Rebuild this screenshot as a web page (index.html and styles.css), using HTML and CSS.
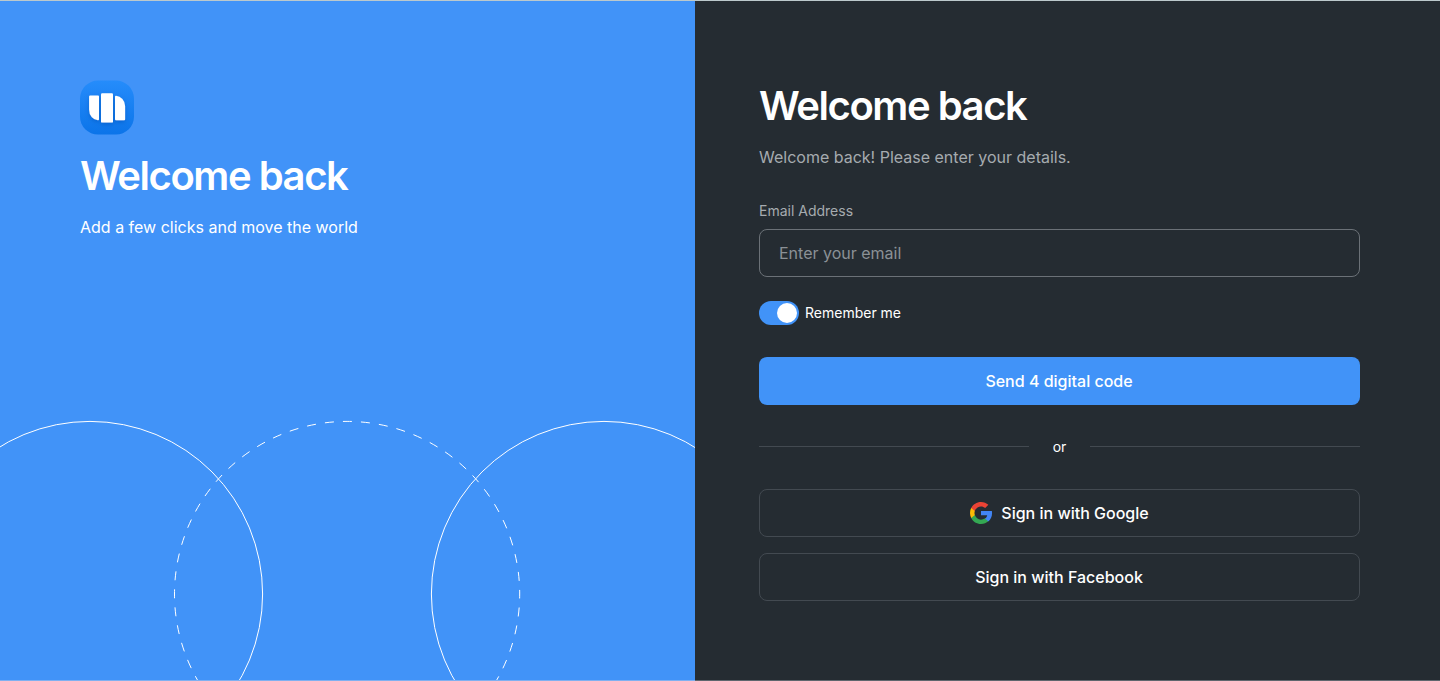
FILE: index.html
```html
<!DOCTYPE html>
<html lang="en">
<head>
<meta charset="utf-8">
<title>Welcome back</title>
<link rel="stylesheet" href="styles.css">
</head>
<body>
<main class="page">
  <section class="intro">
    <svg class="rings" width="695" height="261" viewBox="0 0 695 261" fill="none" stroke="#fff" aria-hidden="true">
      <circle cx="90" cy="174" r="172.6"/>
      <circle cx="347.1" cy="174" r="172.6" stroke-dasharray="9.037 9.037" stroke-dashoffset="4.52"/>
      <circle cx="604" cy="174" r="172.6"/>
    </svg>
    <svg class="logo" width="54" height="54" viewBox="0 0.4 54 54" aria-hidden="true">
      <defs>
        <linearGradient id="tile" x1="0" y1="0" x2="0" y2="1">
          <stop offset="0" stop-color="#258cfb"/>
          <stop offset="1" stop-color="#0b74e9"/>
        </linearGradient>
        <filter id="shade" x="-30%" y="-30%" width="160%" height="180%">
          <feDropShadow dx="0" dy="2" stdDeviation="2" flood-color="#0050b5" flood-opacity=".5"/>
        </filter>
      </defs>
      <rect width="54" height="54" rx="18" fill="url(#tile)"/>
      <g fill="#fff" filter="url(#shade)">
        <path d="M10.200 14.900H18a1 1 0 0 1 1 1V38.600a1 1 0 0 1-1 1A9 10.500 0 0 1 9.100 29V16a1.100 1.100 0 0 1 1.100-1.100z"/>
        <rect x="21" y="12.600" width="12" height="29.400" rx="1.200"/>
        <path d="M36 15.100A9.500 10.500 0 0 1 45.100 25.500V38.600a1 1 0 0 1-1 1H36a1 1 0 0 1-1-1V16.100a1 1 0 0 1 1-1z"/>
      </g>
    </svg>
    <h1 class="title">Welcome back</h1>
    <p class="lead">Add a few clicks and move the world</p>
  </section>
  <section class="panel">
    <h2 class="title">Welcome back</h2>
    <p class="lead muted">Welcome back! Please enter your details.</p>
    <form class="form">
      <label class="label" for="email">Email Address</label>
      <input class="field" id="email" type="email" placeholder="Enter your email">
      <div class="remember"><span class="switch"><span class="knob"></span></span><span class="remember-text">Remember me</span></div>
      <button class="button primary" type="button">Send 4 digital code</button>
      <div class="divider"><span class="or">or</span></div>
      <button class="button outline" type="button">
        <svg class="google" width="24" height="24" viewBox="0 0 24 24" aria-hidden="true">
          <path fill="#4285f4" d="M23.060 12.250c0-.780-.070-1.530-.200-2.250H12v4.260h6.220c-.260 1.370-1.040 2.530-2.210 3.310v2.770h3.570c2.080-1.920 3.480-4.740 3.480-8.090z"/>
          <path fill="#34a853" d="M12 23c2.970 0 5.460-.980 7.280-2.660l-3.570-2.770c-.980.660-2.230 1.060-3.710 1.060-2.860 0-5.290-1.930-6.160-4.530H2.180v2.840C3.990 20.530 7.700 23 12 23z"/>
          <path fill="#fbbc05" d="M5.840 14.090c-.220-.660-.350-1.360-.350-2.090s.130-1.430.350-2.090V7.070H2.180C1.430 8.550 1 10.220 1 12s.430 3.450 1.180 4.930z"/>
          <path fill="#ea4335" d="M12 5.380c1.620 0 3.060.560 4.210 1.640l3.150-3.150C17.450 2.090 14.970 1 12 1 7.700 1 3.990 3.470 2.180 7.070l3.660 2.840c.870-2.600 3.300-4.530 6.160-4.530z"/>
        </svg>
        <span>Sign in with Google</span>
      </button>
      <button class="button outline" type="button">Sign in with Facebook</button>
    </form>
  </section>
</main>
</body>
</html>
```

FILE: styles.css
```css
* { box-sizing: border-box; }
body { margin: 0; font-family: Inter, "Liberation Sans", sans-serif; color: #fff; }
.page {
  display: grid;
  grid-template-columns: 695px 1fr;
  height: 681px;
  overflow: hidden;
  background: #252c32;
  border-top: 1px solid #bcc9cc;
}
.intro { position: relative; padding: 80px; background: #4193f8; border-bottom: 1px solid #7fb0f0; overflow: hidden; }
.rings { position: absolute; left: 0; bottom: -1px; }
.logo { display: block; overflow: visible; }
.title { margin: 0; font-size: 40px; line-height: 50px; font-weight: 600; letter-spacing: -1.45px; }
.intro .title { margin-top: 16px; }
.lead { margin: 14px 0 0; font-size: 16px; line-height: 24px; }
.muted { color: #a6abaf; }
.panel { padding: 80px 80px 0 64px; border-bottom: 1px solid #5f666d; }
.form { display: flex; flex-direction: column; margin-top: 32px; }
.label { font-size: 14px; line-height: 20px; color: #a6abaf; }
.field {
  height: 48px;
  margin-top: 8px;
  padding: 0 19px;
  border: 1px solid #6b7177;
  border-radius: 8px;
  background: transparent;
  font: 400 16px/24px Inter, "Liberation Sans", sans-serif;
}
.field::placeholder { color: #8b9196; opacity: 1; }
.remember { display: flex; align-items: center; gap: 6px; margin-top: 24px; height: 24px; }
.remember-text { font-size: 14px; line-height: 20px; }
.switch { display: flex; justify-content: flex-end; align-items: center; width: 40px; height: 24px; padding: 2px; border-radius: 12px; background: #4193f8; }
.knob { width: 20px; height: 20px; border-radius: 50%; background: #fff; }
.button {
  display: flex;
  justify-content: center;
  align-items: center;
  gap: 8px;
  height: 48px;
  padding: 0 1px 0 0;
  border: 0;
  border-radius: 8px;
  background: transparent;
  color: #fff;
  font: 500 16px/24px Inter, "Liberation Sans", sans-serif;
}
.primary { margin-top: 32px; background: #4193f8; }
.outline { border: 1px solid #434a51; }
.outline + .outline { margin-top: 16px; }
.divider { display: flex; align-items: center; gap: 24px; height: 20px; margin: 32px 0; }
.divider::before, .divider::after { content: ""; flex: 1; height: 1px; margin-bottom: 1px; background: #434a51; }
.or { font-size: 14px; line-height: 20px; }
```
